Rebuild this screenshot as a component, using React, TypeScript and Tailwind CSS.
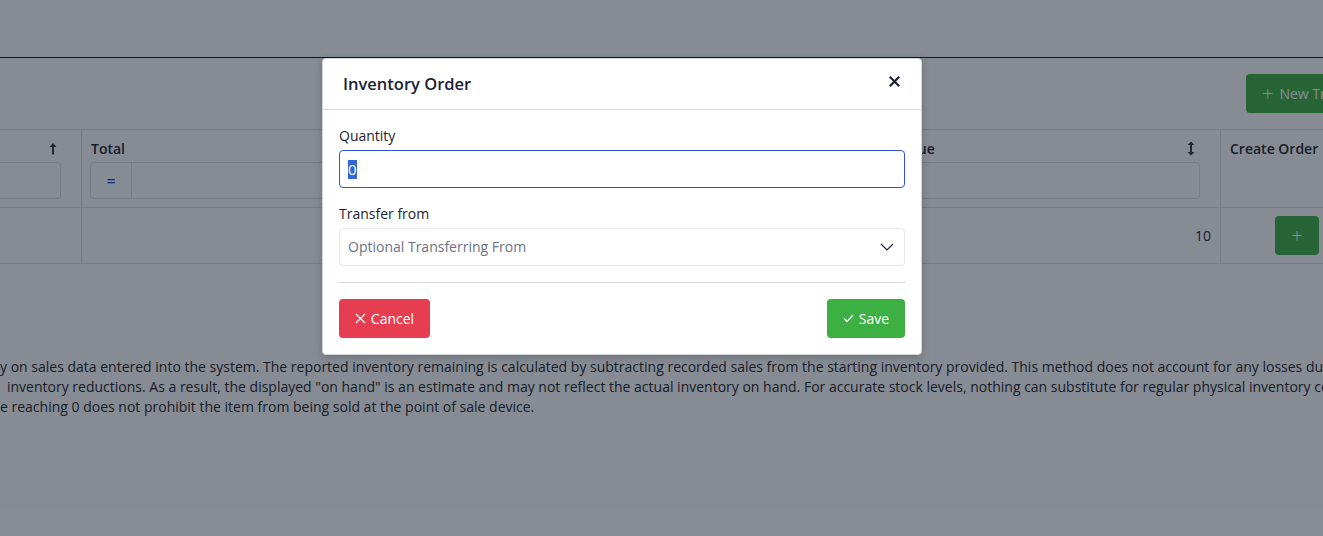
import React from "react";

const font = { fontFamily: '"Open Sans", "Noto Sans", sans-serif' };

function SortUp() {
  return (
    <svg width="8" height="13" viewBox="0 0 8 13" className="text-[#343a40]">
      <path d="M4 1 L7.5 5 H5 V12.5 H3 V5 H0.5 Z" fill="currentColor" />
    </svg>
  );
}

function SortBoth() {
  return (
    <svg width="8" height="15" viewBox="0 0 8 15" className="text-[#343a40]">
      <path d="M4 0.5 L7.5 4 H5 V11 H7.5 L4 14.5 L0.5 11 H3 V4 H0.5 Z" fill="currentColor" />
    </svg>
  );
}

function Background() {
  return (
    <div className="w-[1420px] bg-white" style={font}>
      <div className="h-[58px] border-b border-[#0a1020]" />
      <div className="flex justify-end pr-[20px] pt-[16px]">
        <button className="flex h-[39px] w-[154px] items-center gap-[6px] rounded-[4px] bg-[#3cb043] pl-[16px] text-[14px] text-white">
          <span className="text-[20px] font-light leading-none">+</span>
          <span>New Transfer</span>
        </button>
      </div>
      <div className="mt-[16px] flex border-t border-b border-[#dee2e6] text-[14px] text-[#212529]">
        {/* col1 */}
        <div className="flex w-[82px] flex-col border-r border-[#dee2e6]">
          <div className="flex h-[78px] flex-col border-b border-[#dee2e6] pt-[8px]">
            <div className="flex h-[20px] items-center justify-end pr-[24px]">
              <SortUp />
            </div>
            <div className="mt-[4px] h-[37px] w-[61px] rounded-r-[4px] border border-l-0 border-[#dee2e6]" />
          </div>
          <div className="h-[55px]" />
        </div>
        {/* col2 */}
        <div className="flex w-[806px] flex-col border-r border-[#dee2e6]">
          <div className="flex h-[78px] flex-col border-b border-[#dee2e6] px-[8px] pt-[8px]">
            <div className="flex h-[20px] items-center pl-[1px] font-semibold">Total</div>
            <div className="mt-[4px] flex h-[37px] rounded-[4px] border border-[#dee2e6]">
              <div className="flex w-[41px] items-center justify-center border-r border-[#dee2e6] text-[16px] text-[#0d3bd6]">=</div>
              <div className="flex-1" />
            </div>
          </div>
          <div className="h-[55px]" />
        </div>
        {/* col3 */}
        <div className="flex w-[333px] flex-col border-r border-[#dee2e6]">
          <div className="flex h-[78px] flex-col border-b border-[#dee2e6] pl-[9px] pr-[20px] pt-[8px]">
            <div className="flex h-[20px] items-center justify-between pr-[5px] font-semibold">
              <span>Value</span>
              <SortBoth />
            </div>
            <div className="mt-[4px] h-[37px] rounded-[4px] border border-[#dee2e6]" />
          </div>
          <div className="flex h-[55px] items-center justify-end pr-[9px]">10</div>
        </div>
        {/* col4 */}
        <div className="flex w-[152px] flex-col">
          <div className="flex h-[78px] flex-col border-b border-[#dee2e6] px-[9px] pt-[8px]">
            <div className="flex h-[20px] items-center font-semibold">Create Order</div>
          </div>
          <div className="flex h-[55px] items-center justify-center">
            <button className="flex h-[39px] w-[44px] items-center justify-center rounded-[4px] bg-[#3cb043] text-[20px] font-light text-white">+</button>
          </div>
        </div>
        <div className="flex-1" />
      </div>
      <div className="mt-[93px] text-[14px] leading-[20px] text-[#212529]">
        <div className="whitespace-nowrap">y on sales data entered into the system. The reported inventory remaining is calculated by subtracting recorded sales from the starting inventory provided. This method does not account for any losses due to theft, spoilage, or other</div>
        <div className="whitespace-nowrap pl-[7px]">inventory reductions. As a result, the displayed "on hand" is an estimate and may not reflect the actual inventory on hand. For accurate stock levels, nothing can substitute for regular physical inventory counts.</div>
        <div className="whitespace-nowrap">e reaching 0 does not prohibit the item from being sold at the point of sale device.</div>
      </div>
    </div>
  );
}

function Modal() {
  return (
    <div
      className="absolute left-[322px] top-[58px] w-[600px] rounded-[4px] border border-[#d1d5db] bg-white shadow-[0_2px_8px_rgba(0,0,0,0.2)]"
      style={font}
    >
      <div className="flex h-[51px] items-center justify-between border-b border-[#d7d9dc] pl-[20px] pr-[20px]">
        <h2 className="text-[16.5px] font-semibold text-[#1b2234]">Inventory Order</h2>
        <svg width="11" height="11" viewBox="0 0 11 11" className="mr-[1px] mt-[-5px]">
          <path d="M1.5 1.5 L9.5 9.5 M9.5 1.5 L1.5 9.5" stroke="#1b2234" strokeWidth="2.2" strokeLinecap="square" />
        </svg>
      </div>
      <div className="px-[16px] pt-[16px] pb-[16px]">
        <label className="block text-[14px] font-medium leading-[20px] text-[#1b2234]">Quantity</label>
        <div className="mt-[4px] flex h-[38px] items-center rounded-[4px] border border-[#2f52d9] pl-[8px] text-[15px] text-[#1b2234]">
          <span className="bg-[#3367d6] leading-[19px] text-white">0</span>
        </div>
        <label className="mt-[16px] block text-[14px] font-medium leading-[20px] text-[#1b2234]">Transfer from</label>
        <div className="mt-[4px] flex h-[38px] items-center justify-between rounded-[4px] border border-[#e5e7eb] pl-[8px] pr-[10px] text-[14px] text-[#6b7280]">
          <span className="mt-[-2px]">Optional Transferring From</span>
          <svg width="14" height="8" viewBox="0 0 14 8">
            <path d="M1 1 L7 7 L13 1" stroke="#1b2234" strokeWidth="1.2" fill="none" />
          </svg>
        </div>
        <div className="mt-[16px] border-t border-[#d4d6d9]" />
        <div className="mt-[16px] flex justify-between">
          <button className="flex h-[39px] w-[91px] items-center justify-center gap-[5px] rounded-[4px] bg-[#e63e50] text-[14px] text-white">
            <svg width="11" height="11" viewBox="0 0 11 11">
              <path d="M1 1 L10 10 M10 1 L1 10" stroke="white" strokeWidth="1.3" />
            </svg>
            <span>Cancel</span>
          </button>
          <button className="flex h-[39px] w-[78px] items-center justify-center gap-[5px] rounded-[4px] bg-[#3cb043] text-[14px] text-white">
            <svg width="11" height="9" viewBox="0 0 11 9">
              <path d="M1 4.5 L4 7.5 L10 1" stroke="white" strokeWidth="1.3" fill="none" />
            </svg>
            <span>Save</span>
          </button>
        </div>
      </div>
    </div>
  );
}

export default function App() {
  return (
    <div className="relative h-[536px] w-[1323px] overflow-hidden bg-white">
      <Background />
      <div className="absolute inset-0 bg-[#101828]/50" />
      <Modal />
    </div>
  );
}
